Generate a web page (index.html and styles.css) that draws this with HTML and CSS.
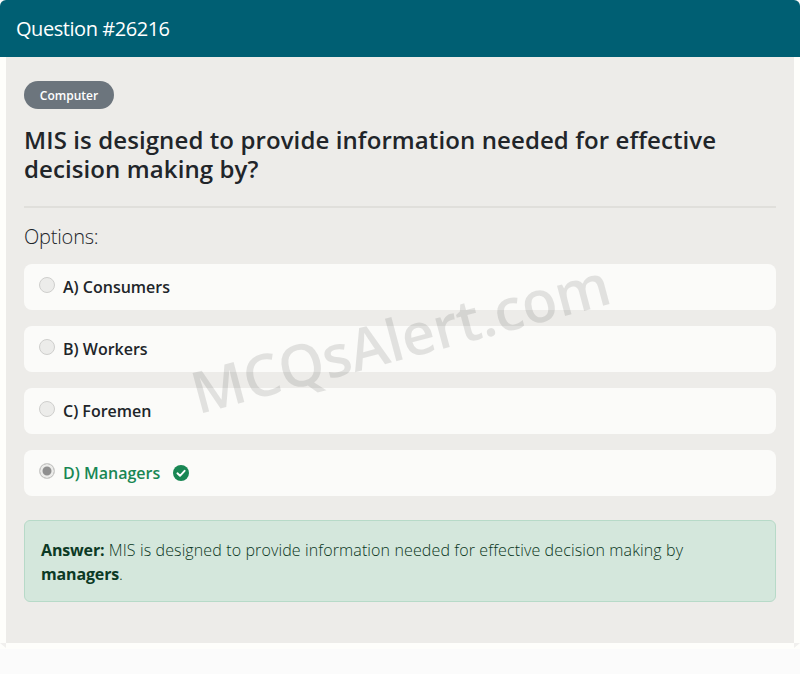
FILE: index.html
```html
<!DOCTYPE html>
<html lang="en">
<head>
<meta charset="utf-8">
<title>Question #26216</title>
<link rel="stylesheet" href="styles.css">
</head>
<body>
<div class="card">
  <header class="card-header">Question #26216</header>
  <main class="card-body">
    <span class="badge">Computer</span>
    <h1 class="question">MIS is designed to provide information needed for effective decision making by?</h1>
    <hr class="rule">
    <h2 class="options-title">Options:</h2>
    <ul class="options">
      <li class="option"><span class="radio"></span><span class="label">A) Consumers</span></li>
      <li class="option"><span class="radio"></span><span class="label">B) Workers</span></li>
      <li class="option"><span class="radio"></span><span class="label">C) Foremen</span></li>
      <li class="option"><span class="radio radio-on"></span><span class="label label-correct">D) Managers</span>
        <svg class="check" viewBox="0 0 16 16" width="16" height="16" aria-hidden="true"><circle cx="8" cy="8" r="8" fill="#198754"/><path d="M4.4 8.3 7 10.8 11.6 5.8" fill="none" stroke="#fff" stroke-width="1.9" stroke-linecap="round" stroke-linejoin="round"/></svg>
      </li>
    </ul>
    <div class="answer"><strong>Answer:</strong> MIS is designed to provide information needed for effective decision making by <strong>managers</strong>.</div>
    <div class="watermark">MCQsAlert.com</div>
  </main>
</div>
<div class="page-foot"></div>
</body>
</html>
```
FILE: styles.css
```css
* { box-sizing: border-box; }
html, body { margin: 0; padding: 0; }
body {
  height: 674px;
  overflow: hidden;
  background: #fbfbfb;
  font-family: "Open Sans", "Lato", sans-serif;
  color: #212529;
}
.card {
  background: #fefefb;
  height: 649px;
  border-radius: 6px 6px 0 0;
  overflow: hidden;
}
.card-header {
  height: 57px;
  padding: 0 16px;
  background: #005f73;
  color: #fff;
  font-size: 20px;
  line-height: 58px;
  letter-spacing: -0.45px;
}
.card-body {
  position: relative;
  height: 586px;
  margin: 0 6px;
  padding: 24px 18px 0;
  background: #edecE9;
}
.card-body::before,
.card-body::after {
  content: "";
  position: absolute;
  bottom: -5px;
  width: 6px;
  height: 5px;
  background: #f1f0ee;
}
.card-body::before { left: -6px; clip-path: polygon(0 0, 100% 0, 100% 100%); }
.card-body::after { right: -6px; clip-path: polygon(0 0, 100% 0, 0 100%); }
.badge {
  display: block;
  width: 90px;
  height: 28px;
  border-radius: 14px;
  background: #6c757d;
  color: #fff;
  font-size: 12px;
  font-weight: 600;
  line-height: 29px;
  text-align: center;
}
.question {
  margin: 16px 0 0;
  font-size: 24px;
  font-weight: 600;
  line-height: 29px;
  letter-spacing: 0.1px;
  color: #212529;
}
.rule {
  height: 2px;
  margin: 22.5px 0 0;
  border: 0;
  background: #e0dfdb;
}
.options-title {
  margin: 17.5px 0 0;
  font-size: 20px;
  font-weight: 300;
  line-height: 24px;
  letter-spacing: -0.2px;
  color: #212529;
}
.options {
  list-style: none;
  margin: 15px 0 0;
  padding: 0;
  display: flex;
  flex-direction: column;
  gap: 16.5px;
}
.option {
  display: flex;
  align-items: center;
  height: 45.5px;
  padding: 0 15px;
  background: #fbfbf9;
  border-radius: 8px;
}
.radio {
  flex: none;
  width: 16px;
  height: 16px;
  margin-top: -3px;
  border: 1px solid #cfcfcd;
  border-radius: 50%;
  background: #ececea;
}
.radio-on {
  background: #8f8f8f;
  box-shadow: inset 0 0 0 2.5px #ececea;
}
.label {
  margin-left: 8px;
  font-size: 16px;
  font-weight: 600;
  color: #212529;
}
.label-correct { color: #198754; }
.check { margin-left: 13px; flex: none; }
.answer {
  margin-top: 24px;
  height: 82px;
  padding: 17px 16px 16px;
  background: #d4e7dc;
  border: 1px solid #b7dac8;
  border-radius: 6px;
  color: #0a3622;
  font-size: 16px;
  font-weight: 300;
  line-height: 24px;
  letter-spacing: 0.12px;
}
.answer strong { color: #0c3a25; font-weight: 700; letter-spacing: -0.15px; }
.watermark {
  position: absolute;
  left: 394px;
  top: 280px;
  transform: translate(-50%, -50%) rotate(-15deg);
  white-space: nowrap;
  font-size: 58px;
  font-weight: 600;
  letter-spacing: -0.4px;
  color: rgba(0, 0, 0, 0.1);
  pointer-events: none;
}
```
